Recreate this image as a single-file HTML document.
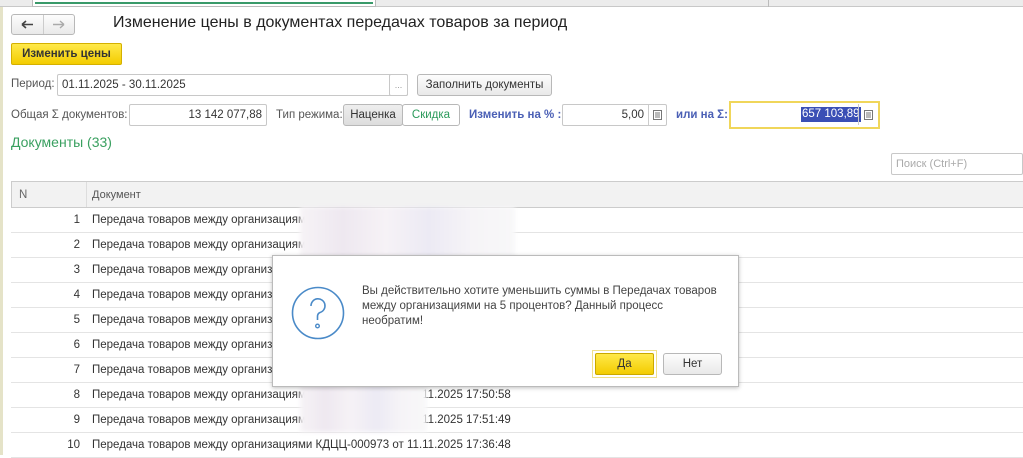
<!DOCTYPE html>
<html><head><meta charset="utf-8"><style>
*{box-sizing:border-box;margin:0;padding:0}
body{width:1023px;height:455px;overflow:hidden;background:#fff;font-family:"Liberation Sans",sans-serif;font-size:11.5px;color:#333;position:relative}
.a{position:absolute}
.inp{position:absolute;background:#fff;border:1px solid #c8c8c8;border-radius:2px;height:22px;line-height:20px;padding:0 4px}
.btn{position:absolute;border:1px solid #b8b8b8;border-radius:3px;background:linear-gradient(#fdfdfd,#e9e9e9);height:22px;line-height:20px;text-align:center}
.row{position:absolute;left:11px;width:1012px;height:25px;border-bottom:1px solid #e4e4e4;line-height:25px}
.row .n{position:absolute;left:0;width:69px;text-align:right}
.row .d{position:absolute;left:81px;white-space:nowrap}
.blur{position:absolute;background:linear-gradient(90deg,#f6f3f6,#eee8f0 20%,#f6f2f6 40%,#eceaf4 60%,#f6f4f7 80%,#f8f8f9);filter:blur(2px)}
</style></head><body>
<div class="a" style="left:0;top:0;width:1023px;height:7px;background:#ececec;border-bottom:1px solid #c8c8c8"></div>
<div class="a" style="left:32px;top:0;width:344px;height:7px;background:#fff;border:1px solid #bbb;border-top:none"></div>
<div class="a" style="left:35px;top:2px;width:338px;height:2px;background:#3a9a6a"></div>
<div class="a" style="left:768px;top:0;width:1px;height:7px;background:#bbb"></div>
<div class="a" style="left:0;top:7px;width:3px;height:448px;background:#e5e3c8"></div>

<div class="btn" style="left:11px;top:14px;width:64px;height:21px"></div>
<div class="a" style="left:43px;top:15px;width:1px;height:19px;background:#ccc"></div>
<svg class="a" style="left:20px;top:19px" width="50" height="11" viewBox="0 0 50 11"><path d="M2 5.5H13M2 5.5L6 2M2 5.5L6 9" stroke="#444" stroke-width="1.6" fill="none"/><path d="M33 5.5H44M44 5.5L40 2M44 5.5L40 9" stroke="#aaa" stroke-width="1.4" fill="none"/></svg>
<div class="a" style="left:113px;top:14px;font-size:16px;color:#222">Изменение цены в документах передачах товаров за период</div>

<div class="a" style="left:11px;top:43px;width:111px;height:22px;background:linear-gradient(#ffe94a,#f3cc00);border:1px solid #d4b000;border-radius:2px;text-align:center;line-height:20px;font-weight:bold;color:#333">Изменить цены</div>

<div class="a" style="left:11px;top:78px;color:#555">Период:</div>
<div class="inp" style="left:57px;top:74px;width:351px">01.11.2025 - 30.11.2025</div>
<div class="inp" style="left:389px;top:74px;width:19px;color:#999;padding:0;text-align:center;font-size:9px">...</div>
<div class="btn" style="left:417px;top:74px;width:135px">Заполнить документы</div>

<div class="a" style="left:11px;top:109px;color:#555">Общая Σ документов:</div>
<div class="inp" style="left:129px;top:104px;width:138px;text-align:right">13 142 077,88</div>
<div class="a" style="left:276px;top:109px;color:#555">Тип режима:</div>
<div class="btn" style="left:343px;top:104px;width:60px;background:linear-gradient(#eee,#ddd)">Наценка</div>
<div class="btn" style="left:402px;top:104px;width:58px;background:#fff;color:#2a9a5a">Скидка</div>
<div class="a" style="left:469px;top:109px;color:#4a5fb5;font-weight:bold">Изменить на % :</div>
<div class="inp" style="left:562px;top:104px;width:105px;text-align:right;padding-right:22px">5,00</div>
<div class="a" style="left:648px;top:105px;width:1px;height:20px;background:#ccc"></div>
<svg class="a" style="left:653px;top:110px" width="9" height="10"><rect x=".5" y=".5" width="8" height="9" fill="none" stroke="#777"/><path d="M2 3h5M2 5h5M2 7h5" stroke="#777"/></svg>
<div class="a" style="left:676px;top:109px;color:#4a5fb5;font-weight:bold">или на Σ:</div>
<div class="a" style="left:729px;top:101px;width:151px;height:28px;border:2px solid #f0d65a;background:#fff"></div>
<div class="a" style="left:801px;top:107px;background:#3a4fb5;color:#fff;padding:0 1px;height:15px;line-height:15px">657 103,89</div>
<div class="a" style="left:858px;top:104px;width:1px;height:21px;background:#ccc"></div>
<svg class="a" style="left:864px;top:110px" width="9" height="10"><rect x=".5" y=".5" width="8" height="9" fill="none" stroke="#777"/><path d="M2 3h5M2 5h5M2 7h5" stroke="#777"/></svg>

<div class="a" style="left:11px;top:134px;font-size:14px;color:#3aa060">Документы (33)</div>
<div class="inp" style="left:891px;top:153px;width:132px;color:#aaa;font-size:11px">Поиск (Ctrl+F)</div>

<div class="a" style="left:11px;top:181px;width:1012px;height:27px;background:#f2f2f2;border:1px solid #ccc;border-right:none"></div>
<div class="a" style="left:86px;top:182px;width:1px;height:25px;background:#ddd"></div>
<div class="a" style="left:19px;top:189px;color:#666">N</div>
<div class="a" style="left:92px;top:189px;color:#555;font-size:11px">Документ</div>

<div class="row" style="top:208px"><span class="n">1</span><span class="d">Передача товаров между организациями</span></div>
<div class="row" style="top:233px"><span class="n">2</span><span class="d">Передача товаров между организациями</span></div>
<div class="row" style="top:258px"><span class="n">3</span><span class="d">Передача товаров между организациями</span></div>
<div class="row" style="top:283px"><span class="n">4</span><span class="d">Передача товаров между организациями</span></div>
<div class="row" style="top:308px"><span class="n">5</span><span class="d">Передача товаров между организациями</span></div>
<div class="row" style="top:333px"><span class="n">6</span><span class="d">Передача товаров между организациями</span></div>
<div class="row" style="top:358px"><span class="n">7</span><span class="d">Передача товаров между организациями</span></div>
<div class="row" style="top:383px"><span class="n">8</span><span class="d">Передача товаров между организациями КДЦЦ-000971 от 11.11.2025 17:50:58</span></div>
<div class="row" style="top:408px"><span class="n">9</span><span class="d">Передача товаров между организациями КДЦЦ-000972 от 11.11.2025 17:51:49</span></div>
<div class="row" style="top:433px"><span class="n">10</span><span class="d">Передача товаров между организациями КДЦЦ-000973 от 11.11.2025 17:36:48</span></div>

<div class="blur" style="left:300px;top:207px;width:215px;height:51px"></div>
<div class="blur" style="left:300px;top:380px;width:127px;height:52px"></div>

<div class="a" style="left:272px;top:255px;width:467px;height:132px;background:#fff;border:1px solid #bbb;box-shadow:0 1px 4px rgba(0,0,0,.25)"></div>
<svg class="a" style="left:291px;top:286px" width="54" height="54" viewBox="0 0 54 54"><circle cx="27" cy="27" r="25.5" fill="none" stroke="#4a8ac8" stroke-width="1.6"/><path d="M20 20a7 7 0 1 1 9 6.5c-2 .8-2.5 2-2.5 4V34" fill="none" stroke="#4a8ac8" stroke-width="1.6"/><circle cx="26.5" cy="40" r="1.8" fill="none" stroke="#4a8ac8" stroke-width="1.4"/></svg>
<div class="a" style="left:362px;top:284px;line-height:15px;color:#444;font-size:11.5px">Вы действительно хотите уменьшить суммы в Передачах товаров<br>между организациями на 5 процентов? Данный процесс<br>необратим!</div>
<div class="a" style="left:592px;top:350px;width:65px;height:28px;border:1px solid #f0e08a"></div>
<div class="a" style="left:595px;top:353px;width:59px;height:22px;background:linear-gradient(#ffe94a,#f3cc00);border:1px solid #c9a800;border-radius:2px;text-align:center;line-height:20px;color:#333">Да</div>
<div class="btn" style="left:663px;top:353px;width:59px">Нет</div>
</body></html>
